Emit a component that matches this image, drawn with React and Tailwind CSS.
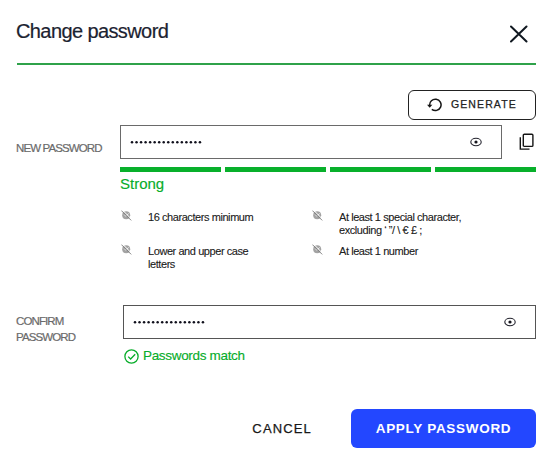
function EyeIcon() {
  return (
    <svg width="12" height="10" viewBox="0 0 12 10" fill="none">
      <ellipse cx="6" cy="5" rx="5.2" ry="3.7" stroke="#20202a" strokeWidth="1.1" />
      <circle cx="6" cy="5" r="1.6" fill="#15151d" />
    </svg>
  );
}

function RuleIcon() {
  return (
    <svg className="mt-[1px] shrink-0" width="11" height="11" viewBox="0 0 11 11" fill="none">
      <circle cx="5.2" cy="5.2" r="4" fill="#a3a3a3" />
      <path d="M3.2 4.6l1.7 1.7 2.8-2.9" stroke="#f4f4f4" strokeWidth="0.9" />
      <path d="M1.4 0L11 9.6" stroke="#ffffff" strokeWidth="1" />
      <path d="M0.4 0.6L10.2 10.4" stroke="#777777" strokeWidth="0.9" />
    </svg>
  );
}

function Rule({ children }) {
  return (
    <div className="flex items-start">
      <RuleIcon />
      <p className="mt-[2px] ml-[16px] text-[11px] leading-[13px] tracking-[-0.43px] whitespace-nowrap text-[#202020] [-webkit-text-stroke:0.1px_#202020]">{children}</p>
    </div>
  );
}

function Dots() {
  return (
    <svg width="74" height="4" viewBox="0 0 74 4" fill="#10101c" aria-label="Password">
      {Array.from({ length: 16 }, (_, i) => (
        <circle key={i} cx={2 + i * 4.53} cy="2.3" r="1.25" />
      ))}
    </svg>
  );
}

export default function App() {
  return (
    <div className="flex h-[468px] w-[550px] flex-col bg-white pl-[17px] pr-[14px] font-['Liberation_Sans',Arial,sans-serif] text-[#1b2230]">
      <header className="flex h-[65px] justify-between border-b-2 border-[#2fa24a]">
        <h1 className="mt-[19px] -ml-px text-[20px] leading-6 tracking-[-0.6px] whitespace-nowrap [-webkit-text-stroke:0.2px_#1b2230]">Change password</h1>
        <svg className="mt-[25px] mr-2" width="18" height="18" viewBox="0 0 18 18" fill="none" stroke="#101820" strokeWidth="2" strokeLinecap="round">
          <path d="M1 1.5l15.5 15M16.5 1.5l-15.5 15" />
        </svg>
      </header>

      <div className="mt-[25px] flex justify-end">
        <button className="flex h-[30px] w-32 items-center rounded-md border border-[#222222] pl-[18px] text-[10.5px] tracking-[1.1px] text-[#222222] [-webkit-text-stroke:0.25px_#222222]">
          <svg className="mr-[8px] shrink-0" width="16" height="14" viewBox="0 0 16 14" fill="none" stroke="#151515" strokeWidth="1.5">
            <path d="M2.7 7.5A5.7 5.7 0 1 1 4.8 11.3" />
            <path d="M0 6.8h5.4l-2.7 2.9z" fill="#151515" stroke="none" />
          </svg>
          GENERATE
        </button>
      </div>

      <div className="mt-[5px] flex h-[34px]">
        <label className="mt-[15px] -ml-px w-[104px] text-[11.5px] leading-4 tracking-[-0.88px] whitespace-nowrap text-[#6a6a6a] [-webkit-text-stroke:0.2px_#6a6a6a]">NEW PASSWORD</label>
        <div className="flex w-[382px] items-center justify-between border border-[#6a6a6a] pl-[9px] pr-[19px]">
          <Dots />
          <EyeIcon />
        </div>
        <svg className="mt-[8px] ml-[17px]" width="16" height="18" viewBox="0 0 16 18" fill="none" stroke="#151515" strokeWidth="1.4">
          <rect x="4.3" y="1.2" width="9.6" height="12.2" rx="1" />
          <path d="M1.3 4.2v11.9h9.2" />
        </svg>
      </div>

      <div className="mt-2 ml-[103px] flex flex-col">
        <div className="grid grid-cols-4 gap-1">
          <span className="h-[5px] bg-[#08b02b]" />
          <span className="h-[5px] bg-[#08b02b]" />
          <span className="h-[5px] bg-[#08b02b]" />
          <span className="h-[5px] bg-[#08b02b]" />
        </div>
        <p className="mt-[4px] text-[15px] leading-4 text-[#08ad2a] [-webkit-text-stroke:0.15px_#08ad2a]">Strong</p>
        <div className="mt-[17px] ml-px grid grid-cols-[191px_1fr] gap-y-[6px]">
          <Rule>16 characters minimum</Rule>
          <Rule>At least 1 special character,<br />excluding ‘ ”/ \ € £ ;</Rule>
          <Rule>Lower and upper case<br />letters</Rule>
          <Rule>At least 1 number</Rule>
        </div>
      </div>

      <div className="mt-[34px] flex h-[34px]">
        <label className="mt-[8px] -ml-px w-[107px] text-[11.5px] leading-4 tracking-[-0.88px] text-[#6a6a6a] [-webkit-text-stroke:0.2px_#6a6a6a]">CONFIRM<br />PASSWORD</label>
        <div className="flex flex-1 items-center justify-between border border-[#555555] pl-[9px] pr-[19px]">
          <Dots />
          <EyeIcon />
        </div>
      </div>
      <div className="mt-[9px] ml-[107px] flex h-4 items-center gap-1 text-[13.5px] tracking-[-0.32px] text-[#08ad2a]">
        <svg className="shrink-0" width="15" height="15" viewBox="0 0 15 15" fill="none" stroke="#08ad2a" strokeWidth="1.3">
          <circle cx="7.5" cy="7.5" r="6.6" />
          <path d="M4.2 7.6l2.4 2.4 4.6-4.8" />
        </svg>
        <span className="pt-px whitespace-nowrap [-webkit-text-stroke:0.15px_#08ad2a]">Passwords match</span>
      </div>

      <footer className="mt-auto mb-5 flex h-[39px] items-center justify-end">
        <button className="mr-[39px] text-[13px] tracking-[1.15px] text-[#181818] [-webkit-text-stroke:0.25px_#181818]">CANCEL</button>
        <button className="h-[39px] w-[185px] rounded-[6px] bg-[#2347ff] pt-[2px] text-[13.5px] font-bold tracking-[0.7px] text-white">APPLY PASSWORD</button>
      </footer>
    </div>
  );
}
